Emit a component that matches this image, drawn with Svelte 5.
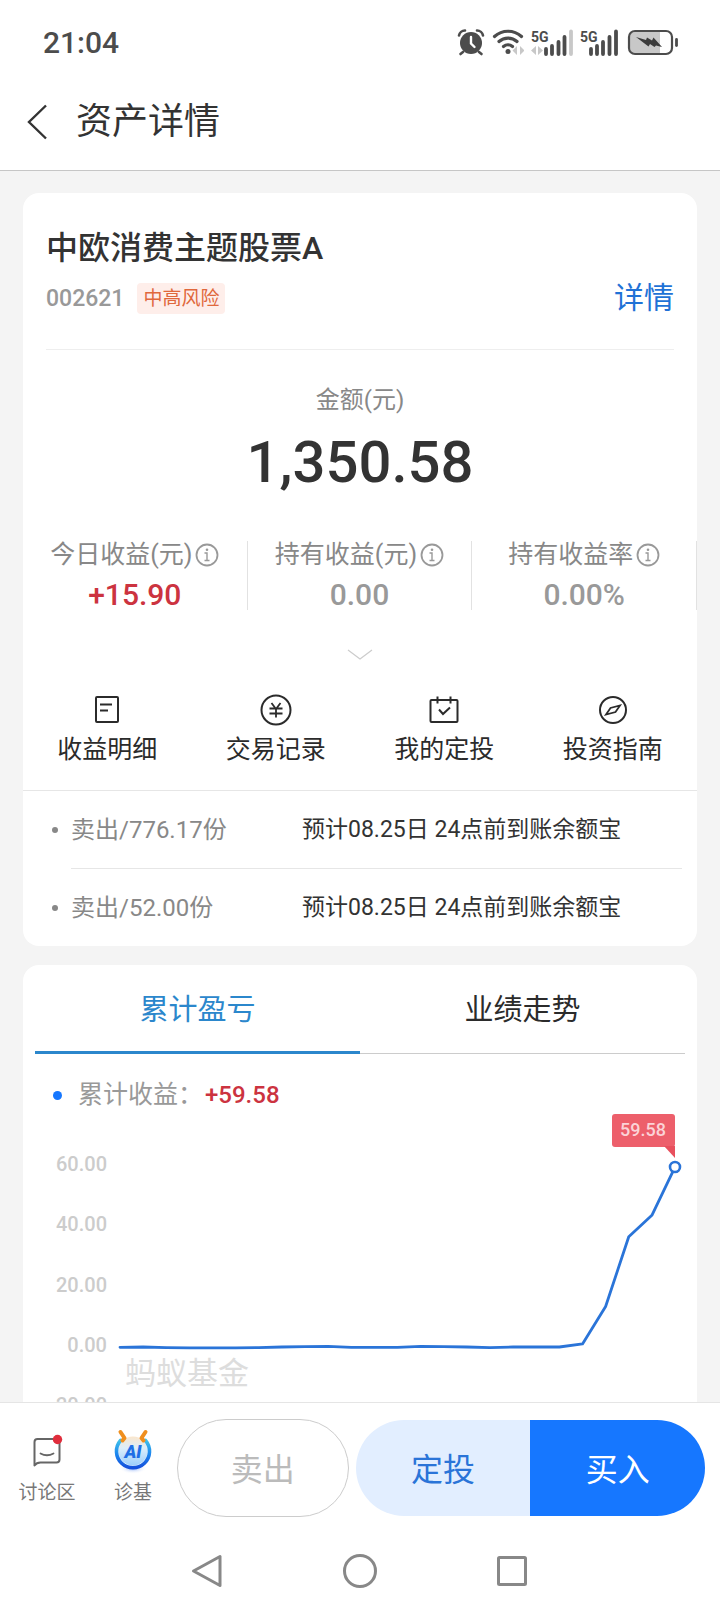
<script>
	let activeTab = 0;

	const tabs = ["累计盈亏", "业绩走势"];

	const stats = [
		{ label: "今日收益(元)", value: "+15.90", up: true },
		{ label: "持有收益(元)", value: "0.00", up: false },
		{ label: "持有收益率", value: "0.00%", up: false }
	];

	const actions = [
		{ icon: "bill", label: "收益明细" },
		{ icon: "yen", label: "交易记录" },
		{ icon: "calendar", label: "我的定投" },
		{ icon: "compass", label: "投资指南" }
	];

	const records = [
		{ name: "卖出/776.17份", note: "预计08.25日 24点前到账余额宝" },
		{ name: "卖出/52.00份", note: "预计08.25日 24点前到账余额宝" }
	];

	// cumulative profit, one value per day
	const profit = [
		-0.1, 0, -0.2, -0.3, -0.3, -0.3, -0.2, 0, 0.1, 0.2, -0.1, -0.1, -0.1,
		0.2, 0.1, 0, -0.2, 0, 0, 0, 1, 13.4, 36.5, 43.6, 59.58
	];
	const ticks = [60, 40, 20, 0, -20];

	const chartLeft = 97;
	const chartRight = 652;
	const chartZero = 237;
	const unit = 3.02;

	const toX = i => chartLeft + (i * (chartRight - chartLeft)) / (profit.length - 1);
	const toY = v => chartZero - v * unit;

	const line = profit.map((v, i) => `${toX(i)},${toY(v)}`).join(" ");
	const last = profit[profit.length - 1];
</script>

<div class="page">
	<header>
		<div class="status">
			<span class="clock">21:04</span>
			<div class="status-icons">
				<svg width="28" height="28" viewBox="0 0 28 28">
					<circle cx="14" cy="15" r="11" fill="#4c4c4c" />
					<path d="M2 7.5a6 6 0 0 1 6-5M26 7.5a6 6 0 0 0-6-5M6 24l-2.5 2M22 24l2.5 2" fill="none" stroke="#4c4c4c" stroke-width="2.6" stroke-linecap="round" />
					<path d="M14 9v6.5l3.5 3.5" fill="none" stroke="#fff" stroke-width="2.4" stroke-linecap="round" />
				</svg>
				<svg width="32" height="28" viewBox="0 0 32 28">
					<path d="M2.5 8.5a20 20 0 0 1 27 0M7 13.5a13.5 13.5 0 0 1 18 0M11.5 18.5a7 7 0 0 1 9 0" fill="none" stroke="#4c4c4c" stroke-width="3.2" stroke-linecap="round" />
					<circle cx="16" cy="23.5" r="2.5" fill="#4c4c4c" />
					<path d="M25 18v9l-4.5-4.5zM28 18v9l4.5-4.5z" fill="#c8c8c8" />
				</svg>
				<svg width="42" height="28" viewBox="0 0 42 28">
					<text x="0" y="14" class="net">5G</text>
					<path d="M5 18v9l-5-4.5zM7 18v9l5-4.5z" fill="#c8c8c8" />
					<path d="M15 21v5M21 18v8M27.5 14v12M33.5 9v17" stroke="#4c4c4c" stroke-width="3.8" stroke-linecap="round" />
					<path d="M40 3.5v22.5" stroke="#c8c8c8" stroke-width="3.8" stroke-linecap="round" />
				</svg>
				<svg width="40" height="28" viewBox="0 0 40 28">
					<text x="0" y="14" class="net">5G</text>
					<path d="M11 21v5M17 18v8M23 14v12M29.5 9v17M36 3.5v22.5" stroke="#4c4c4c" stroke-width="3.8" stroke-linecap="round" />
				</svg>
				<svg width="52" height="28" viewBox="0 0 52 28">
					<path d="M8 4h25v21h-25a5 5 0 0 1-5-5v-11a5 5 0 0 1 5-5z" fill="#c8c8c8" />
					<rect x="2" y="3" width="43" height="23" rx="6" fill="none" stroke="#4c4c4c" stroke-width="2.2" />
					<path d="M9 9l10 3 1-2.5 5 3 1.5-3 8.5 9.5-6-1.5-1.5 1.5-4.5-3-1.5 2.5z" fill="#3c3c3c" />
					<path d="M49.5 11.5v6" stroke="#4c4c4c" stroke-width="2.8" stroke-linecap="round" />
				</svg>
			</div>
		</div>
		<div class="nav">
			<button class="back" aria-label="返回">
				<svg width="20" height="36" viewBox="0 0 20 36">
					<path d="M19 1.5L2 18l17 16.5" fill="none" stroke="#333" stroke-width="2.4" />
				</svg>
			</button>
			<h1>资产详情</h1>
		</div>
	</header>

	<main>
		<section class="card">
			<div class="summary">
				<h2>中欧消费主题股票A</h2>
				<div class="meta">
					<span class="code">002621</span>
					<span class="risk">中高风险</span>
					<a href="#detail">详情</a>
				</div>
			</div>

			<div class="amount">
				<span class="amount-label">金额(元)</span>
				<strong>1,350.58</strong>
			</div>

			<div class="stats">
				{#each stats as stat}
					<div class="stat">
						<span class="stat-label">
							{stat.label}
							<svg width="24" height="24" viewBox="0 0 24 24" fill="none" stroke="#999">
								<circle cx="12" cy="12" r="10.5" stroke-width="1.8" />
								<path d="M9.5 10h2.5v7M9.5 17.5h5" stroke-width="1.4" />
								<circle cx="12" cy="6.7" r="1.3" fill="#999" stroke="none" />
							</svg>
						</span>
						<span class="stat-value" class:up={stat.up}>{stat.value}</span>
					</div>
				{/each}
			</div>

			<button class="expand" aria-label="展开">
				<svg width="26" height="11" viewBox="0 0 26 11">
					<path d="M1 1l12 9 12-9" fill="none" stroke="#ccc" stroke-width="1.2" />
				</svg>
			</button>

			<div class="actions">
				{#each actions as action}
					<button class="action">
						<svg width="32" height="32" viewBox="0 0 32 32" fill="none" stroke="#2b2b2b" stroke-width="2">
							{#if action.icon === "bill"}
								<rect x="5" y="3" width="22" height="25" rx="1" />
								<path d="M9 10.5h12M9 16.5h8" />
							{:else if action.icon === "yen"}
								<circle cx="16" cy="16" r="14.5" />
								<path d="M11.5 9l4.5 6 4.5-6M9.5 14.5h13M9.5 19.5h13M16 14.5v9" stroke-width="1.8" />
							{:else if action.icon === "calendar"}
								<rect x="2.5" y="6" width="27" height="22" rx="1" />
								<path d="M9.5 2.5v7M22.5 2.5v7M11 15.5l4 4.5 7-6.5" />
							{:else}
								<circle cx="16" cy="16" r="13" />
								<path d="M23 11.5l-4.5 6.5-9.5 2.5 4.5-6.5z" stroke-width="1.8" />
							{/if}
						</svg>
						<span>{action.label}</span>
					</button>
				{/each}
			</div>

			<ul class="records">
				{#each records as record}
					<li>
						<span class="record-name">{record.name}</span>
						<span class="record-note">{record.note}</span>
					</li>
				{/each}
			</ul>
		</section>

		<section class="card trend">
			<div class="tabs" role="tablist">
				{#each tabs as tab, i}
					<button role="tab" aria-selected={activeTab === i} class:active={activeTab === i} on:click={() => activeTab = i}>{tab}</button>
				{/each}
			</div>

			<div class="legend">
				<span class="dot"></span>
				<span>累计收益：</span>
				<strong>+59.58</strong>
			</div>

			<svg class="chart" viewBox="0 0 674 330">
				{#each ticks as tick}
					<text x="84" y={toY(tick) + 5} class="tick">{tick.toFixed(2)}</text>
				{/each}
				<text x="102" y="274" class="watermark">蚂蚁基金</text>
				<polyline points={line} fill="none" stroke="#2a74d8" stroke-width="2.8" stroke-linejoin="round" stroke-linecap="round" />
				<circle cx={chartRight} cy={toY(last)} r="5" fill="#fff" stroke="#2a74d8" stroke-width="2.6" />
				<rect x="589" y="4" width="63" height="33" rx="3" fill="#ed5f6b" />
				<path d="M641 36h11v12z" fill="#e8505d" />
				<text x="620" y="26" class="tip">{last}</text>
			</svg>
		</section>
	</main>

	<footer>
		<div class="toolbar">
			<button class="tool">
				<svg width="40" height="48" viewBox="0 0 40 48">
					<path d="M7.5 38.5V15a3 3 0 0 1 3-3h19a3 3 0 0 1 3 3v17.5a3 3 0 0 1-3 3h-16q-4 0-6 3z" fill="none" stroke="#666" stroke-width="2" stroke-linejoin="round" />
					<path d="M13.5 26.5q6.5 3.5 13 0" fill="none" stroke="#666" stroke-width="1.8" stroke-linecap="round" />
					<circle cx="30.5" cy="12.5" r="4.7" fill="#e02d3c" />
				</svg>
				<span>讨论区</span>
			</button>
			<button class="tool">
				<svg width="40" height="48" viewBox="0 0 40 48">
					<defs>
						<linearGradient id="ring" x1="0" y1="0" x2="0" y2="1">
							<stop offset="0" stop-color="#3fc0ea" />
							<stop offset="0.5" stop-color="#1c86ee" />
							<stop offset="1" stop-color="#1450dc" />
						</linearGradient>
						<linearGradient id="face" x1="0" y1="0" x2="0" y2="1">
							<stop offset="0" stop-color="#fbe6cc" />
							<stop offset="0.4" stop-color="#dceefb" />
							<stop offset="1" stop-color="#9ccffc" />
						</linearGradient>
						<radialGradient id="glow">
							<stop offset="0" stop-color="#7fa6f5" />
							<stop offset="1" stop-color="#fff" stop-opacity="0" />
						</radialGradient>
					</defs>
					<ellipse cx="20" cy="41" rx="14" ry="6" fill="url(#glow)" />
					<circle cx="20" cy="24" r="14.5" fill="url(#face)" />
					<path d="M7.5 13.5A16.5 16.5 0 1 0 32.5 13.5" fill="none" stroke="url(#ring)" stroke-width="3.6" stroke-linecap="round" />
					<path d="M7.5 5l4 6-2 2.5M32.5 5l-4 6 2 2.5" fill="none" stroke="#ef8f1f" stroke-width="4" stroke-linecap="round" stroke-linejoin="round" />
					<text x="20" y="31" class="ai">AI</text>
				</svg>
				<span>诊基</span>
			</button>
			<button class="sell">卖出</button>
			<div class="pair">
				<button class="plan">定投</button>
				<button class="buy">买入</button>
			</div>
		</div>
		<div class="system">
			<button aria-label="后退">
				<svg width="36" height="36" viewBox="0 0 36 36">
					<path d="M31 3.5v29L4.5 18z" />
				</svg>
			</button>
			<button aria-label="主页">
				<svg width="36" height="36" viewBox="0 0 36 36">
					<circle cx="18" cy="18" r="15.5" />
				</svg>
			</button>
			<button aria-label="最近任务">
				<svg width="36" height="36" viewBox="0 0 36 36">
					<rect x="3.5" y="4.5" width="27" height="27" rx="1" />
				</svg>
			</button>
		</div>
	</footer>
</div>

<style>
	:global(body) {
		margin: 0;
	}

	.page {
		display: flex;
		flex-direction: column;
		height: 100vh;
		background-color: #f4f4f4;
		color: #333;
		font-family: Roboto, "Noto Sans CJK SC", sans-serif;
	}

	button {
		padding: 0;
		border: none;
		background: none;
		color: inherit;
		font-family: inherit;
		cursor: pointer;
	}
	svg {
		display: block;
	}
	h1, h2, ul {
		margin: 0;
		padding: 0;
		font-weight: normal;
	}

	header {
		flex: none;
		padding-bottom: 10px;
		background-color: #fff;
		border-bottom: 1px solid #c6c6c6;
	}
	.status {
		display: flex;
		align-items: center;
		justify-content: space-between;
		height: 84px;
		padding: 0 41px 0 43px;
	}
	.clock {
		color: #4c4c4c;
		font-size: 30px;
		font-weight: 500;
	}
	.status-icons {
		display: flex;
		gap: 7px;
	}
	.net {
		fill: #4c4c4c;
		font-size: 14px;
		font-weight: bold;
	}
	.nav {
		display: flex;
		align-items: center;
		gap: 29px;
		height: 76px;
		padding-left: 27px;
	}
	h1 {
		font-size: 36px;
		line-height: 48px;
	}

	main {
		flex: 1;
		min-height: 0;
		padding: 22px 23px 0;
		overflow-y: auto;
		scrollbar-width: none;
	}
	.card {
		background-color: #fff;
		border-radius: 16px;
		overflow: hidden;
	}
	.summary {
		margin: 0 23px;
		padding: 35px 0 31px;
		border-bottom: 1px solid #eee;
	}
	h2 {
		font-size: 32px;
		font-weight: 500;
		line-height: 40px;
	}
	.meta {
		display: flex;
		align-items: center;
		height: 40px;
		margin-top: 10px;
	}
	.code {
		color: #999;
		font-size: 23px;
		font-weight: 500;
	}
	.risk {
		margin-left: 13px;
		padding: 0 6px;
		border-radius: 4px;
		background-color: #feeeea;
		color: #e0683c;
		font-size: 19px;
		line-height: 31px;
	}
	.meta a {
		margin-left: auto;
		color: #1f72d6;
		font-size: 30px;
		line-height: 40px;
		text-decoration: none;
	}

	.amount {
		display: flex;
		flex-direction: column;
		align-items: center;
		gap: 14px;
		padding-top: 34px;
	}
	.amount-label {
		color: #888;
		font-size: 24px;
		line-height: 32px;
	}
	.amount strong {
		font-size: 58px;
		font-weight: 500;
		line-height: 64px;
	}

	.stats {
		display: grid;
		grid-template-columns: repeat(3, 1fr);
		margin-top: 47px;
	}
	.stat {
		display: flex;
		flex-direction: column;
		align-items: center;
		gap: 11px;
		border-right: 1px solid #e2e2e2;
	}
	.stat-label {
		display: flex;
		align-items: center;
		gap: 3px;
		color: #888;
		font-size: 25px;
		line-height: 28px;
		white-space: nowrap;
	}
	.stat-value {
		color: #999;
		font-size: 30px;
		font-weight: 500;
		line-height: 30px;
	}
	.up {
		color: #cc3340;
	}

	.expand {
		display: block;
		margin: 39px auto 0;
	}

	.actions {
		display: grid;
		grid-template-columns: repeat(4, 1fr);
		padding: 34px 0 25px;
		border-bottom: 1px solid #e6e6e6;
	}
	.action {
		display: flex;
		flex-direction: column;
		align-items: center;
		gap: 9px;
		color: #2b2b2b;
		font-size: 25px;
		line-height: 30px;
	}

	.records {
		padding: 0 15px 0 48px;
		list-style: none;
	}
	.records li {
		display: flex;
		align-items: center;
		height: 77px;
		line-height: 36px;
	}
	.records li + li {
		border-top: 1px solid #e6e6e6;
	}
	.record-name {
		width: 231px;
		color: #888;
		font-size: 24px;
	}
	.record-name::before {
		content: "";
		float: left;
		width: 6px;
		height: 6px;
		margin: 15px 0 0 -19px;
		border-radius: 50%;
		background-color: #888;
	}
	.record-note {
		font-size: 23px;
	}

	.trend {
		margin-top: 19px;
	}
	.tabs {
		display: flex;
		margin: 0 12px;
		box-shadow: inset 0 -1px 0 #ccc;
	}
	.tabs button {
		flex: 1;
		height: 89px;
		padding-bottom: 2px;
		border-bottom: 3px solid transparent;
		color: #2b2b2b;
		font-size: 29px;
	}
	.tabs .active {
		border-color: #2b87cc;
		color: #2b87cc;
	}
	.legend {
		display: flex;
		align-items: center;
		margin: 26px 0 0 30px;
		color: #999;
		font-size: 25px;
		line-height: 30px;
	}
	.dot {
		width: 9px;
		height: 9px;
		margin-right: 16px;
		border-radius: 50%;
		background-color: #1677ff;
	}
	.legend strong {
		margin-left: 2px;
		color: #cc3340;
		font-size: 24px;
		font-weight: 500;
	}
	.chart {
		width: 100%;
	}
	.tick {
		fill: #ccc;
		font-size: 20px;
		font-weight: 500;
		text-anchor: end;
	}
	.watermark {
		fill: #ddd;
		font-size: 31px;
	}
	.tip {
		fill: #fbd3d7;
		font-size: 18px;
		font-weight: 500;
		text-anchor: middle;
	}

	footer {
		flex: none;
		background-color: #fff;
		border-top: 1px solid #e5e5e5;
	}
	.toolbar {
		display: flex;
		align-items: center;
		padding: 16px 15px 0 4px;
	}
	.tool {
		display: flex;
		flex-direction: column;
		align-items: center;
		gap: 4px;
		width: 86px;
		padding-bottom: 2px;
		color: #777;
		font-size: 19px;
		line-height: 28px;
	}
	.ai {
		fill: #1f6fe5;
		font-size: 18px;
		font-style: italic;
		font-weight: 900;
		text-anchor: middle;
	}
	.sell, .pair button {
		padding-bottom: 3px;
		font-size: 32px;
	}
	.sell {
		flex: 34;
		height: 98px;
		margin: 0 7px 0 1px;
		border: 1px solid #ccc;
		border-radius: 49px;
		color: #bbb;
	}
	.pair {
		display: flex;
		flex: 70;
		height: 96px;
		border-radius: 48px;
		overflow: hidden;
	}
	.pair button {
		flex: 1;
	}
	.plan {
		background-color: #e2eeff;
		color: #2a74d8;
	}
	.buy {
		background-color: #1677ff;
		color: #fff;
	}

	.system {
		display: flex;
		justify-content: center;
		gap: 117px;
		padding: 36px 0 21px;
	}
	.system svg {
		fill: none;
		stroke: #888;
		stroke-width: 3;
		stroke-linejoin: round;
	}
</style>
